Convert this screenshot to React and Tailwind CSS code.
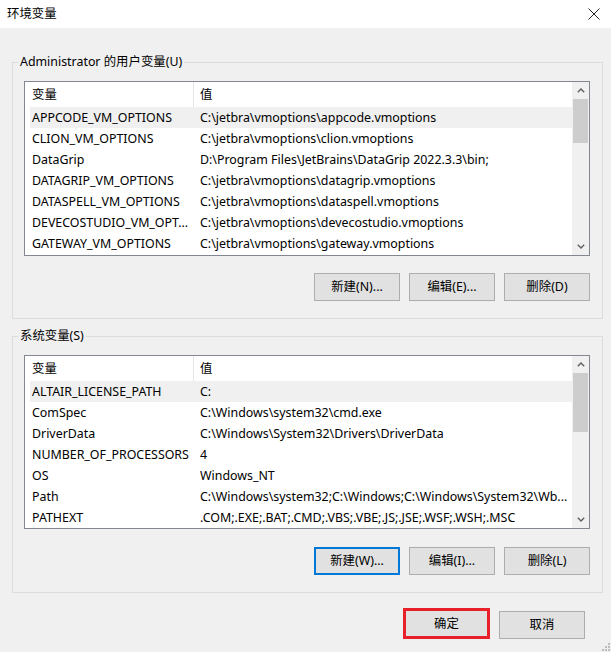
const userVars = [
  ["APPCODE_VM_OPTIONS", "C:\\jetbra\\vmoptions\\appcode.vmoptions"],
  ["CLION_VM_OPTIONS", "C:\\jetbra\\vmoptions\\clion.vmoptions"],
  ["DataGrip", "D:\\Program Files\\JetBrains\\DataGrip 2022.3.3\\bin;"],
  ["DATAGRIP_VM_OPTIONS", "C:\\jetbra\\vmoptions\\datagrip.vmoptions"],
  ["DATASPELL_VM_OPTIONS", "C:\\jetbra\\vmoptions\\dataspell.vmoptions"],
  ["DEVECOSTUDIO_VM_OPT...", "C:\\jetbra\\vmoptions\\devecostudio.vmoptions"],
  ["GATEWAY_VM_OPTIONS", "C:\\jetbra\\vmoptions\\gateway.vmoptions"],
];

const systemVars = [
  ["ALTAIR_LICENSE_PATH", "C:"],
  ["ComSpec", "C:\\Windows\\system32\\cmd.exe"],
  ["DriverData", "C:\\Windows\\System32\\Drivers\\DriverData"],
  ["NUMBER_OF_PROCESSORS", "4"],
  ["OS", "Windows_NT"],
  ["Path", "C:\\Windows\\system32;C:\\Windows;C:\\Windows\\System32\\Wb..."],
  ["PATHEXT", ".COM;.EXE;.BAT;.CMD;.VBS;.VBE;.JS;.JSE;.WSF;.WSH;.MSC"],
];

const Chevron = ({ down }) => (
  <svg width="8" height="5" viewBox="0 0 8 5">
    <polyline
      points={down ? "0.8,0.8 4,4 7.2,0.8" : "0.8,4.2 4,1 7.2,4.2"}
      fill="none"
      stroke="#606060"
      strokeWidth="1.4"
    />
  </svg>
);

const Scrollbar = ({ thumb }) => (
  <div className="flex w-[17px] flex-col bg-[#f0f0f0]">
    <div className="flex h-[17px] items-center justify-center">
      <Chevron />
    </div>
    <div className="flex-1">
      <div className={`mx-[1px] bg-[#cdcdcd] ${thumb}`} />
    </div>
    <div className="flex h-[17px] items-center justify-center">
      <Chevron down />
    </div>
  </div>
);

const VarList = ({ rows, height, thumb }) => (
  <div className={`flex border border-[#828790] bg-white ${height}`}>
    <div className="min-w-0 flex-1 pl-[5px]">
      {/* Header */}
      <div className="flex h-[25px] items-center">
        <div className="w-[163px] pl-[2px]">变量</div>
        <div className="h-full w-px bg-[#e5e5e5]" />
        <div className="pl-[6px]">值</div>
      </div>
      {rows.map(([name, value], i) => (
        <div
          key={name}
          className={`flex h-[21px] items-center whitespace-nowrap ${
            i === 0 ? "bg-[#f0f0f0]" : ""
          }`}
        >
          <div className="w-[164px] shrink-0 overflow-hidden pl-[2px] pr-[2px]">
            {name}
          </div>
          <div className="min-w-0 flex-1 overflow-hidden pl-[6px] pr-[4px]">
            {value}
          </div>
        </div>
      ))}
    </div>
    <Scrollbar thumb={thumb} />
  </div>
);

const Button = ({ children, focused }) => (
  <button
    className={`h-[28px] w-[86px] bg-[#e1e1e1] ${
      focused ? "border-2 border-[#0078d7]" : "border border-[#adadad]"
    }`}
  >
    {children}
  </button>
);

const GroupBox = ({ label, className, children }) => (
  <fieldset
    className={`ml-[12px] w-[591px] min-w-0 border border-[#dcdcdc] ${className}`}
  >
    <legend className="ml-[5px] px-[2px] leading-[16px]">{label}</legend>
    {children}
  </fieldset>
);

export default function App() {
  return (
    <div className="relative h-[652px] w-[611px] overflow-hidden bg-[#f0f0f0] font-['Noto_Sans','Noto_Sans_CJK_SC',sans-serif] text-[12.4px] leading-[16px] text-black">
      {/* Title bar */}
      <div className="flex h-[28px] items-center justify-between bg-white pl-[7px] pr-[11px]">
        <span>环境变量</span>
        <svg width="12" height="12" viewBox="0 0 12 12">
          <path d="M0.5 0.5L11.5 11.5M11.5 0.5L0.5 11.5" stroke="#222" strokeWidth="1" />
        </svg>
      </div>

      {/* User variables */}
      <GroupBox label="Administrator 的用户变量(U)" className="mt-[26px]">
        <div className="pb-[17px] pl-[11px] pr-[12px] pt-[11px]">
          <VarList rows={userVars} height="h-[175px]" thumb="h-[44px]" />
          <div className="mt-[17px] flex justify-end gap-[9px]">
            <Button>新建(N)...</Button>
            <Button>编辑(E)...</Button>
            <Button>删除(D)</Button>
          </div>
        </div>
      </GroupBox>

      {/* System variables */}
      <GroupBox label="系统变量(S)" className="mt-[9px]">
        <div className="pb-[17px] pl-[11px] pr-[12px] pt-[11px]">
          <VarList rows={systemVars} height="h-[174px]" thumb="h-[59px]" />
          <div className="mt-[18px] flex justify-end gap-[9px]">
            <Button focused>新建(W)...</Button>
            <Button>编辑(I)...</Button>
            <Button>删除(L)</Button>
          </div>
        </div>
      </GroupBox>

      {/* Dialog buttons */}
      <div className="mt-[15px] flex items-start justify-end gap-[9px] pr-[26px]">
        <button className="h-[31px] w-[87px] border-[3px] border-[#e8202a] bg-[#e1e1e1]">
          确定
        </button>
        <button className="mt-[3px] h-[28px] w-[86px] border border-[#adadad] bg-[#e1e1e1]">
          取消
        </button>
      </div>

      {/* Resize grip */}
      <svg
        className="absolute bottom-[1px] right-[1px]"
        width="8"
        height="8"
        viewBox="0 0 8 8"
      >
        <rect x="6" y="0" width="2" height="2" fill="#bcbcbc" />
        <rect x="3" y="3" width="2" height="2" fill="#bcbcbc" />
        <rect x="6" y="3" width="2" height="2" fill="#bcbcbc" />
        <rect x="0" y="6" width="2" height="2" fill="#bcbcbc" />
        <rect x="3" y="6" width="2" height="2" fill="#bcbcbc" />
        <rect x="6" y="6" width="2" height="2" fill="#bcbcbc" />
      </svg>
    </div>
  );
}
